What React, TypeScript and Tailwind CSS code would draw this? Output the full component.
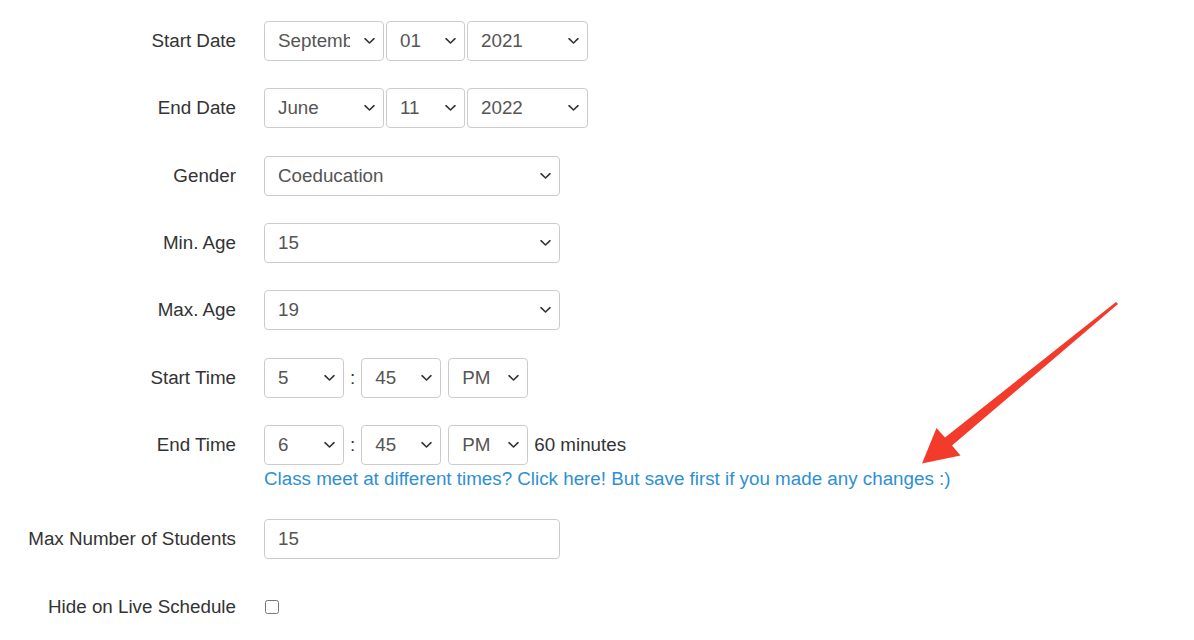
import React from 'react';

const font = { fontFamily: '"Liberation Sans", Arial, sans-serif' };

const Chevron: React.FC = () => (
  <svg
    className="pointer-events-none absolute right-[9px] top-1/2 -translate-y-1/2"
    width="11"
    height="7"
    viewBox="0 0 11 7"
    fill="none"
  >
    <path d="M1 1.2l4.5 4.3 4.5-4.3" stroke="#333" strokeWidth="1.6" strokeLinecap="round" strokeLinejoin="round" />
  </svg>
);

const Select: React.FC<{ value: string; options: string[]; width: string }> = ({ value, options, width }) => (
  <div className={`relative ${width} h-10 shrink-0`}>
    <select
      defaultValue={value}
      className="h-10 w-full appearance-none rounded-[4px] border border-[#ccc] bg-white pl-[13px] pr-[33px] text-[18.8px] text-[#555] outline-none"
      style={font}
    >
      {options.map(o => (
        <option key={o}>{o}</option>
      ))}
    </select>
    <Chevron />
  </div>
);

const Row: React.FC<{ label: string; children: React.ReactNode }> = ({ label, children }) => (
  <div className="grid grid-cols-[236px_1fr] gap-x-[28px]">
    <div className="flex h-10 items-center justify-end whitespace-nowrap text-[18.8px] text-[#333]">{label}</div>
    <div>{children}</div>
  </div>
);

const months = ['January', 'February', 'March', 'April', 'May', 'June', 'July', 'August', 'September', 'October', 'November', 'December'];
const days = Array.from({ length: 31 }, (_, i) => String(i + 1).padStart(2, '0'));
const years = ['2020', '2021', '2022', '2023'];
const hours = Array.from({ length: 12 }, (_, i) => String(i + 1));
const mins = ['00', '15', '30', '45'];
const ages = Array.from({ length: 20 }, (_, i) => String(i + 5));

const App: React.FC = () => {
  return (
    <div className="relative h-[640px] w-[1194px] overflow-hidden bg-white" style={font}>
      <div className="flex flex-col gap-y-[27.33px] pt-[21px]">
        <Row label="Start Date">
          <div className="flex gap-[2px]">
            <Select value="September" options={months} width="w-[120px]" />
            <Select value="01" options={days} width="w-[79px]" />
            <Select value="2021" options={years} width="w-[121px]" />
          </div>
        </Row>
        <Row label="End Date">
          <div className="flex gap-[2px]">
            <Select value="June" options={months} width="w-[120px]" />
            <Select value="11" options={days} width="w-[79px]" />
            <Select value="2022" options={years} width="w-[121px]" />
          </div>
        </Row>
        <Row label="Gender">
          <Select value="Coeducation" options={['Coeducation', 'Boys', 'Girls']} width="w-[296px]" />
        </Row>
        <Row label="Min. Age">
          <Select value="15" options={ages} width="w-[296px]" />
        </Row>
        <Row label="Max. Age">
          <Select value="19" options={ages} width="w-[296px]" />
        </Row>
        <Row label="Start Time">
          <div className="flex items-center">
            <Select value="5" options={hours} width="w-[80px]" />
            <span className="mx-[6px] text-[18.8px] text-[#333]">:</span>
            <Select value="45" options={mins} width="w-[80px]" />
            <span className="w-[7px]" />
            <Select value="PM" options={['AM', 'PM']} width="w-[80px]" />
          </div>
        </Row>
        <Row label="End Time">
          <div className="flex items-center">
            <Select value="6" options={hours} width="w-[80px]" />
            <span className="mx-[6px] text-[18.8px] text-[#333]">:</span>
            <Select value="45" options={mins} width="w-[80px]" />
            <span className="w-[7px]" />
            <Select value="PM" options={['AM', 'PM']} width="w-[80px]" />
            <span className="ml-[6px] text-[18.8px] text-[#333]">60 minutes</span>
          </div>
          <a href="#" className="block whitespace-nowrap text-[18.8px] leading-[27px] text-[#2e8fd4]">
            Class meet at different times? Click here! But save first if you made any changes :)
          </a>
        </Row>
        <Row label="Max Number of Students">
          <input
            type="text"
            defaultValue="15"
            className="h-10 w-[296px] rounded-[4px] border border-[#ccc] bg-white px-[13px] text-[18.8px] text-[#555] outline-none"
            style={font}
          />
        </Row>
        <Row label="Hide on Live Schedule">
          <div className="flex h-10 items-center">
            <input type="checkbox" className="ml-[1px] h-[14px] w-[14px]" />
          </div>
        </Row>
      </div>

      <svg className="pointer-events-none absolute inset-0" width="1194" height="640" viewBox="0 0 1194 640">
        <path
          d="M1118 304 L952 445.5 L960.5 455.5 L922 463.5 L936.5 428 L945 437.5 L1116 302 Z"
          fill="#f33b2c"
        />
      </svg>
    </div>
  );
};

export default App;
